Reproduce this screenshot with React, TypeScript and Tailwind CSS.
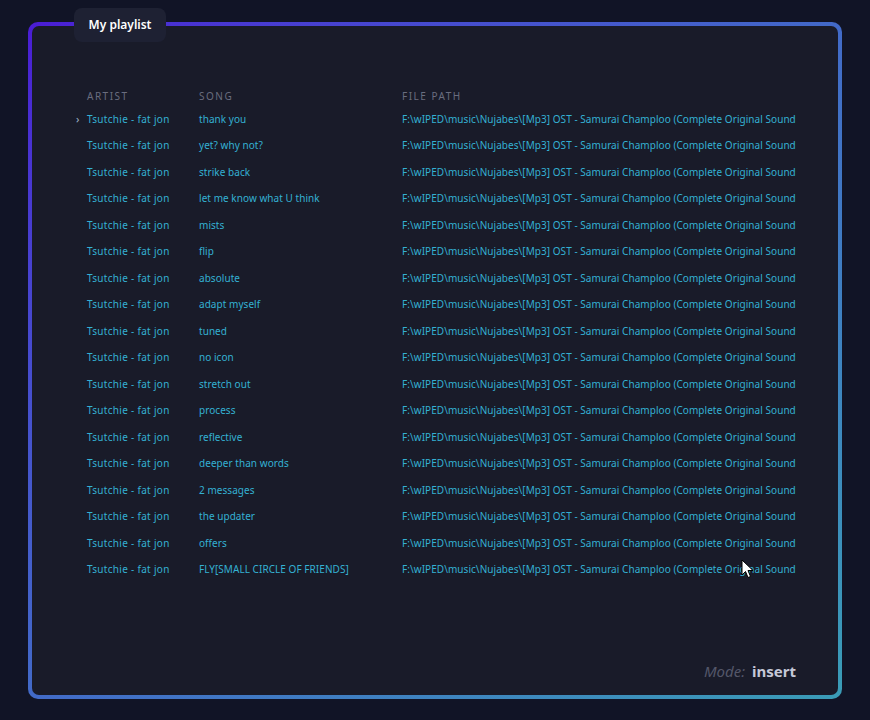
const songs = [
  "thank you",
  "yet? why not?",
  "strike back",
  "let me know what U think",
  "mists",
  "flip",
  "absolute",
  "adapt myself",
  "tuned",
  "no icon",
  "stretch out",
  "process",
  "reflective",
  "deeper than words",
  "2 messages",
  "the updater",
  "offers",
  "FLY[SMALL CIRCLE OF FRIENDS]",
];

const ARTIST = "Tsutchie - fat jon";
const PATH = "F:\\wIPED\\music\\Nujabes\\[Mp3] OST - Samurai Champloo (Complete Original Sound";

const font = { fontFamily: '"Comic Sans MS", "Noto Sans", sans-serif' };

function Cursor() {
  return (
    <svg className="absolute left-[741px] top-[559px]" width="13" height="20" viewBox="0 0 13 20">
      <path d="M1 1 L1 16 L4.5 12.5 L7 18.5 L9.5 17.5 L7 11.5 L12 11.5 Z" fill="#fff" stroke="#000" strokeWidth="1" />
    </svg>
  );
}

export default function App() {
  return (
    <div className="relative w-[870px] h-[720px] bg-[#111426] pt-[22px] pl-[28px]" style={font}>
      <div className="w-[814px] h-[677px] rounded-[10px] p-[4px] bg-gradient-to-br from-[#4a1bd4] to-[#3a9cb6]">
        <div className="flex flex-col h-full rounded-[7px] bg-[#191b29] pl-[44px] pt-[60px]">
          <div className="flex items-center h-[20px] text-[10px] tracking-[1.5px] text-[#6a6d7f]">
            <span className="w-[11px]" />
            <span className="w-[112px]">ARTIST</span>
            <span className="w-[203px]">SONG</span>
            <span>FILE PATH</span>
          </div>
          {songs.map((song, i) => (
            <div key={song} className="flex items-center h-[26.5px] text-[10px] tracking-[0.05px] text-[#34b1d3]">
              <span className="w-[11px] text-[11px] text-[#9fb4c8]">{i === 0 ? "›" : ""}</span>
              <span className="w-[112px] whitespace-nowrap tracking-[0.3px]">{ARTIST}</span>
              <span className="w-[203px] whitespace-nowrap">{song}</span>
              <span className="whitespace-nowrap">{PATH}</span>
            </div>
          ))}
          <div className="flex-1" />
          <div className="flex items-baseline justify-end gap-[7px] pr-[42px] pb-[15px] h-[35px]">
            <span className="text-[15px] italic text-[#545769]">Mode:</span>
            <span className="text-[15px] font-bold text-[#c5c8d8]">insert</span>
          </div>
        </div>
      </div>
      <div className="absolute left-[74px] top-[8px] w-[92px] h-[34px] rounded-lg bg-[#1e2133] flex items-center justify-center text-[12px] font-semibold text-white">
        My playlist
      </div>
      <Cursor />
    </div>
  );
}
